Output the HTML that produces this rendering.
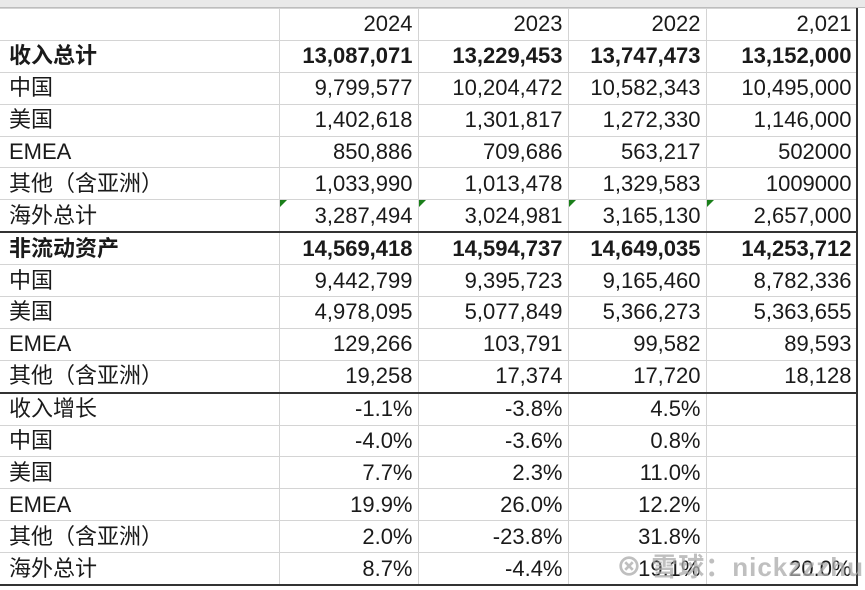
<!DOCTYPE html>
<html><head><meta charset="utf-8"><style>
body{margin:0;width:865px;height:590px;overflow:hidden;background:#fff;font-family:"Liberation Sans","Noto Sans CJK SC",sans-serif;color:#1a1a1a}
.top{position:absolute;left:0;top:0;width:865px;height:7px;background:#e9e9e9;border-bottom:1px solid #bdbdbd}
table{position:absolute;left:0;top:8px;border-collapse:collapse;table-layout:fixed}
td{height:30.9px;padding:0 5px;font-size:22px;border:1px solid #d4d4d4;text-align:right;white-space:nowrap;overflow:hidden;line-height:30px}
td:first-child{text-align:left;padding-left:9px;border-left:none}
tr.b td{font-weight:bold}
tr.t td{border-top:2px solid #333}
tr.last td{border-bottom:2px solid #333}
.g{position:relative}
.g:before{content:"";position:absolute;left:0;top:0;border-top:7px solid #1a7f1a;border-right:7px solid transparent}
.wm{position:absolute;left:616px;top:547px;font-size:26px;color:rgba(170,170,170,.75);font-weight:bold;letter-spacing:1px}
.rb{position:absolute;left:856px;top:8px;width:2px;height:578px;background:#333}
</style></head><body>
<div class="top"></div>
<table>
<colgroup><col style="width:279px"><col style="width:139px"><col style="width:150px"><col style="width:138px"><col style="width:151px"></colgroup>
<tr class="h"><td></td><td>2024</td><td>2023</td><td>2022</td><td>2,021</td></tr>
<tr class="b"><td>收入总计</td><td>13,087,071</td><td>13,229,453</td><td>13,747,473</td><td>13,152,000</td></tr>
<tr><td>中国</td><td>9,799,577</td><td>10,204,472</td><td>10,582,343</td><td>10,495,000</td></tr>
<tr><td>美国</td><td>1,402,618</td><td>1,301,817</td><td>1,272,330</td><td>1,146,000</td></tr>
<tr><td>EMEA</td><td>850,886</td><td>709,686</td><td>563,217</td><td>502000</td></tr>
<tr><td>其他（含亚洲）</td><td>1,033,990</td><td>1,013,478</td><td>1,329,583</td><td>1009000</td></tr>
<tr><td>海外总计</td><td class="g">3,287,494</td><td class="g">3,024,981</td><td class="g">3,165,130</td><td class="g">2,657,000</td></tr>
<tr class="b t"><td>非流动资产</td><td>14,569,418</td><td>14,594,737</td><td>14,649,035</td><td>14,253,712</td></tr>
<tr><td>中国</td><td>9,442,799</td><td>9,395,723</td><td>9,165,460</td><td>8,782,336</td></tr>
<tr><td>美国</td><td>4,978,095</td><td>5,077,849</td><td>5,366,273</td><td>5,363,655</td></tr>
<tr><td>EMEA</td><td>129,266</td><td>103,791</td><td>99,582</td><td>89,593</td></tr>
<tr><td>其他（含亚洲）</td><td>19,258</td><td>17,374</td><td>17,720</td><td>18,128</td></tr>
<tr class="t"><td>收入增长</td><td>-1.1%</td><td>-3.8%</td><td>4.5%</td><td></td></tr>
<tr><td>中国</td><td>-4.0%</td><td>-3.6%</td><td>0.8%</td><td></td></tr>
<tr><td>美国</td><td>7.7%</td><td>2.3%</td><td>11.0%</td><td></td></tr>
<tr><td>EMEA</td><td>19.9%</td><td>26.0%</td><td>12.2%</td><td></td></tr>
<tr><td>其他（含亚洲）</td><td>2.0%</td><td>-23.8%</td><td>31.8%</td><td></td></tr>
<tr class="last"><td>海外总计</td><td>8.7%</td><td>-4.4%</td><td>19.1%</td><td>20.0%</td></tr>
</table>
<div class="rb"></div>
<div class="wm">⊗ 雪球：nickzzzhu</div>
</body></html>
